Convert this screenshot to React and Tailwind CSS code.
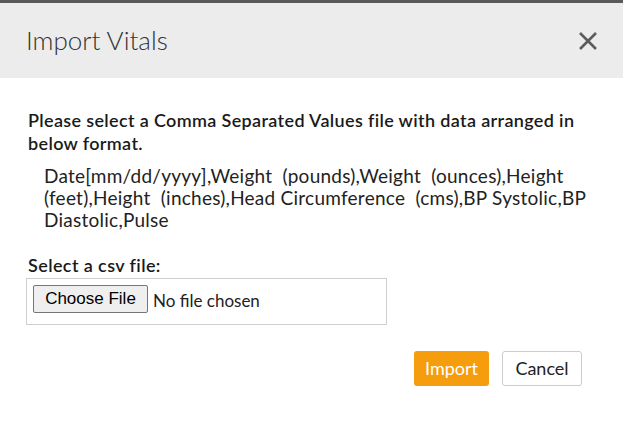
import React from "react";

export default function App() {
  return (
    <div className="h-[422px] w-[623px] overflow-hidden bg-white font-['Lato',sans-serif] text-[#222]">
      <div className="border-t-[3px] border-[#5a5a5a]">
        <div className="flex h-[75px] items-center justify-between bg-[#ececec] pl-[26px] pr-[25px]">
          <h1 className="text-[26px] font-light text-[#333]">Import Vitals</h1>
          <svg width="20" height="20" viewBox="0 0 20 20" className="mt-[1px]">
            <path d="M2 2 L18 18 M18 2 L2 18" stroke="#5c5c5c" strokeWidth="2.6" strokeLinecap="butt" />
          </svg>
        </div>
      </div>

      <div className="pl-[28px] pr-[28px] pt-[31px]">
        <p className="text-[18px] font-semibold leading-[23px] tracking-[0.35px] text-[#1a1a1a]">
          Please select a Comma Separated Values file with data arranged in below format.
        </p>
        <p className="-mr-[20px] mt-[10px] pl-[16px] text-[19px] leading-[22px] tracking-[0.25px] text-[#222]">
          Date[mm/dd/yyyy],Weight&nbsp; (pounds),Weight&nbsp; (ounces),Height (feet),Height&nbsp; (inches),Head Circumference&nbsp; (cms),BP Systolic,BP Diastolic,Pulse
        </p>

        <p className="mt-[23px] text-[18px] font-semibold leading-[22px] tracking-[0.4px] text-[#1a1a1a]">Select a csv file:</p>
        <div className="-ml-[2px] mt-[2px] flex h-[47px] w-[361px] items-start border border-[#cfcfcf] pl-[6px] pt-[6px]">
          <span className="flex h-[28px] w-[115px] items-center justify-center rounded-[2px] border border-[#767676] bg-[#efefef] font-['Liberation_Sans',Arial,sans-serif] text-[17px] text-black">
            Choose File
          </span>
          <span className="ml-[5px] mt-[3px] text-[17px] text-[#222]">No file chosen</span>
        </div>
      </div>

      <div className="mt-[26px] flex justify-end gap-[13px] pr-[41px]">
        <button className="h-[35px] w-[75px] rounded-[3px] bg-[#f59d0d] text-[18px] text-white">Import</button>
        <button className="h-[35px] w-[80px] rounded-[3px] border border-[#cccccc] bg-white text-[18px] text-[#222]">Cancel</button>
      </div>
    </div>
  );
}
